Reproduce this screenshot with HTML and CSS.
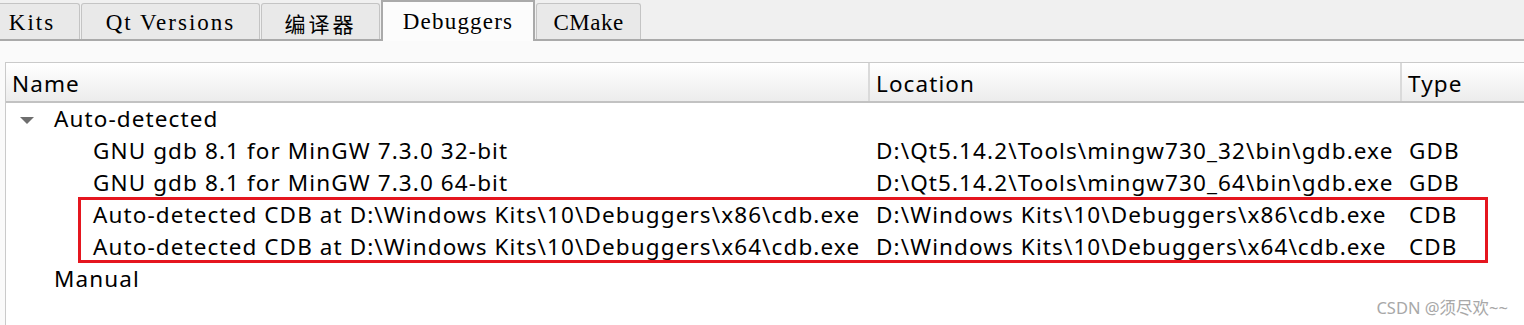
FILE: index.html
```html
<!DOCTYPE html>
<html lang="en">
<head>
    <meta charset="UTF-8">
    <title>Debuggers</title>
    <link rel="stylesheet" href="styles.css">
</head>
<body>

<div class="tabbar">
    <div class="tab tab-kits">Kits</div>
    <div class="tab tab-qt">Qt Versions</div>
    <div class="tab tab-cjk">编译器</div>
    <div class="tab tab-dbg active">Debuggers</div>
    <div class="tab tab-cmake">CMake</div>
</div>

<div class="panel">
    <div class="tree">
        <div class="row head">
            <div class="cell">Name</div>
            <div class="cell sep">Location</div>
            <div class="cell sep">Type</div>
        </div>

        <div class="row">
            <div class="cell group"><span class="arrow"></span>Auto-detected</div>
            <div class="cell"></div>
            <div class="cell"></div>
        </div>
        <div class="row">
            <div class="cell child">GNU gdb 8.1 for MinGW 7.3.0 32-bit</div>
            <div class="cell loc">D:\Qt5.14.2\Tools\mingw730_32\bin\gdb.exe</div>
            <div class="cell type">GDB</div>
        </div>
        <div class="row">
            <div class="cell child">GNU gdb 8.1 for MinGW 7.3.0 64-bit</div>
            <div class="cell loc">D:\Qt5.14.2\Tools\mingw730_64\bin\gdb.exe</div>
            <div class="cell type">GDB</div>
        </div>
        <div class="row">
            <div class="cell child">Auto-detected CDB at D:\Windows Kits\10\Debuggers\x86\cdb.exe</div>
            <div class="cell loc">D:\Windows Kits\10\Debuggers\x86\cdb.exe</div>
            <div class="cell type">CDB</div>
        </div>
        <div class="row">
            <div class="cell child">Auto-detected CDB at D:\Windows Kits\10\Debuggers\x64\cdb.exe</div>
            <div class="cell loc">D:\Windows Kits\10\Debuggers\x64\cdb.exe</div>
            <div class="cell type">CDB</div>
        </div>
        <div class="row">
            <div class="cell group">Manual</div>
            <div class="cell"></div>
            <div class="cell"></div>
        </div>

        <div class="highlight"></div>
    </div>
    <div class="watermark">CSDN @须尽欢~~</div>
</div>

</body>
</html>
```

FILE: styles.css
```css
body {
    margin: 0;
    padding: 0;
    width: 1524px;
    height: 325px;
    overflow: hidden;
    background: #fafafa;
    font-family: "Noto Sans", "Noto Sans CJK SC", sans-serif;
}
.tabbar {
    display: flex;
    align-items: flex-end;
    height: 39px;
    background: #f0f0f0;
    border-bottom: 2px solid #aaaaaa;
    margin-left: -16px;
}
.tab {
    height: 36px;
    box-sizing: border-box;
    margin-right: 1px;
    line-height: 38px;
    text-align: center;
    background: #e9e9e9;
    border: 1px solid #c4c4c4;
    border-bottom: none;
    border-radius: 3px 3px 0 0;
    font-family: "Liberation Serif", serif;
    font-size: 23px;
    letter-spacing: 2px;
    color: #000;
}
.tab-kits { width: 96px; }
.tab-qt { width: 179px; }
.tab-cjk {
    width: 119px;
    font-family: "Noto Sans CJK SC", sans-serif;
    font-size: 21px;
    letter-spacing: 3px;
}
.tab-dbg {
    width: 154px;
    letter-spacing: 1.2px;
}
.tab-cmake {
    width: 105px;
    letter-spacing: 0.5px;
}
.tab.active {
    height: 41px;
    margin-bottom: -2px;
    background: #fcfcfc;
    border: 2px solid #aaaaaa;
    border-bottom: none;
    border-radius: 0;
    line-height: 40px;
}
.panel {
    position: relative;
    height: 284px;
    padding: 21px 0 0 5px;
    box-sizing: border-box;
}
.tree {
    position: relative;
    background: #ffffff;
    border-top: 1px solid #cacaca;
    border-left: 1px solid #cacaca;
    height: 262px;
    font-size: 22.5px;
    letter-spacing: 1.1px;
    color: #000;
}
.row {
    display: grid;
    grid-template-columns: 862px 532px 1fr;
    height: 32px;
    line-height: 32px;
    white-space: nowrap;
}
.row.head {
    height: 38px;
    line-height: 41px;
    background: linear-gradient(#ffffff, #ececec);
    border-bottom: 2px solid #c2c2c2;
}
.head .cell {
    padding-left: 6px;
}
.head .sep {
    border-left: 2px solid #dadada;
    padding-left: 6px;
}
.cell {
    overflow: hidden;
}
.group {
    padding-left: 48px;
    position: relative;
}
.arrow {
    position: absolute;
    left: 14px;
    top: 14px;
    width: 0;
    height: 0;
    border-left: 7px solid transparent;
    border-right: 7px solid transparent;
    border-top: 7px solid #6e6e6e;
}
.child {
    padding-left: 87px;
}
.loc {
    padding-left: 8px;
}
.type {
    padding-left: 9px;
}
.highlight {
    position: absolute;
    left: 72px;
    top: 134px;
    width: 1404px;
    height: 60px;
    border: 3px solid #e5161f;
}
.watermark {
    position: absolute;
    right: 16px;
    bottom: 6px;
    font-size: 16.5px;
    color: #a8a8a8;
}
```
